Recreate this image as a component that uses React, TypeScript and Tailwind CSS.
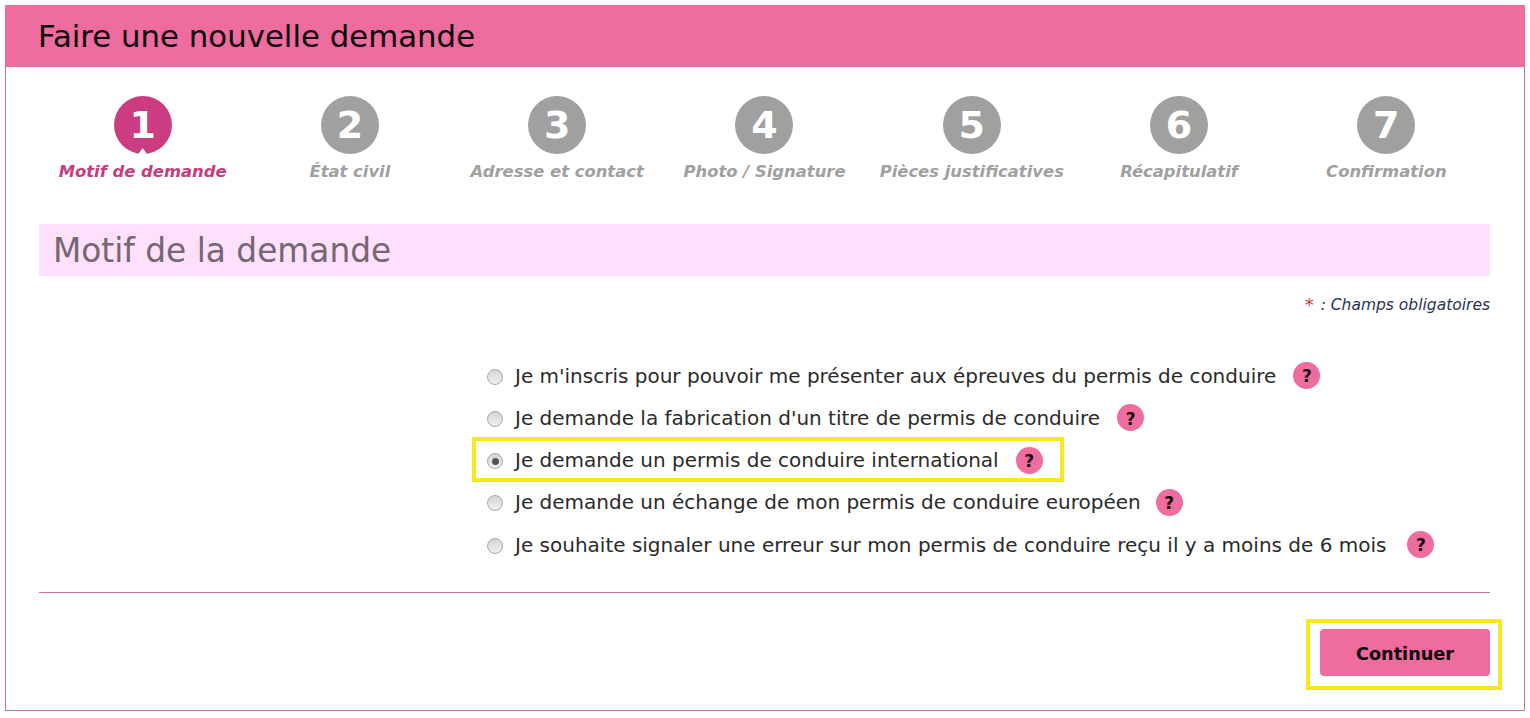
const steps = [
  "Motif de demande",
  "État civil",
  "Adresse et contact",
  "Photo / Signature",
  "Pièces justificatives",
  "Récapitulatif",
  "Confirmation",
];

const options = [
  { label: "Je m'inscris pour pouvoir me présenter aux épreuves du permis de conduire", gap: "ml-[17px]" },
  { label: "Je demande la fabrication d'un titre de permis de conduire", gap: "ml-[17px]" },
  { label: "Je demande un permis de conduire international", gap: "ml-[17px]", checked: true },
  { label: "Je demande un échange de mon permis de conduire européen", gap: "ml-[15px]" },
  { label: "Je souhaite signaler une erreur sur mon permis de conduire reçu il y a moins de 6 mois", gap: "ml-[21px]" },
];

const Step = ({ index, label }: { index: number; label: string }) => {
  const active = index === 0;
  return (
    <div className="flex flex-col items-center">
      <div
        className={`relative flex h-[58px] w-[58px] items-center justify-center rounded-full text-[38px] font-bold text-white ${
          active ? "bg-[#cb3d80]" : "bg-[#a0a0a0]"
        }`}
      >
        {index + 1}
        {active && (
          <span className="absolute bottom-[-1px] left-[24px] h-[7px] w-[10px] bg-white [clip-path:polygon(50%_0,100%_100%,0_100%)]" />
        )}
      </div>
      <div
        className={`mt-[8px] whitespace-nowrap text-[16.4px] font-bold italic leading-5 ${
          active ? "text-[#c73c7d]" : "text-[#a0a0a0]"
        }`}
      >
        {label}
      </div>
    </div>
  );
};

const Radio = ({ checked }: { checked?: boolean }) => (
  <span className="mt-[2px] flex h-4 w-4 shrink-0 items-center justify-center rounded-full border border-[#a9a9a9] bg-gradient-to-b from-[#d4d4d4] to-[#f0f0f0]">
    {checked && <span className="h-[7px] w-[7px] rounded-full bg-[#555555]" />}
  </span>
);

const App = () => {
  return (
    <div className="h-[718px] w-[1530px] bg-white px-[5px] pt-[5px] font-['DejaVu_Sans',Verdana,sans-serif]">
      <div className="flex h-[706px] flex-col border-x border-b border-[#cb6f9f]">
        <div className="-mx-px flex h-[62px] items-center bg-[#ee6c9e] pl-[33px] text-[30.8px] text-[#0a0008]">
          Faire une nouvelle demande
        </div>

        <div className="flex-1 pl-[33px] pr-[34px] pt-[29px]">
          <div className="grid grid-cols-7">
            {steps.map((label, i) => (
              <Step key={label} index={i} label={label} />
            ))}
          </div>

          <div className="mt-[42px] flex h-[52px] items-center bg-[#fedffc] pl-[14px] pt-[3px] text-[32.8px] text-[#746770]">
            Motif de la demande
          </div>

          <div className="mt-[19px] flex items-center justify-end text-[15.5px] italic leading-5 text-[#2b3356]">
            <span className="mr-[7px] text-[18px] not-italic text-[#e0343c]">*</span>: Champs obligatoires
          </div>

          <div className="ml-[448px] mt-[48.5px] flex flex-col gap-[18.25px]">
            {options.map((o) => (
              <div key={o.label} className="relative flex h-6 items-center text-[20px] text-[#2b2b2b]">
                <Radio checked={o.checked} />
                <span className="ml-3 whitespace-nowrap">{o.label}</span>
                <span className={`${o.gap} flex h-[27px] w-[27px] shrink-0 items-center justify-center rounded-full bg-[#ee6c9e] pt-[3px] text-[17px] font-bold text-[#12040c]`}>
                  ?
                </span>
                {o.checked && (
                  <span className="absolute left-[-15px] top-[-11px] h-[45px] w-[592px] border-4 border-[#f7e91c]" />
                )}
              </div>
            ))}
          </div>

          <div className="mt-[35.5px] border-t border-[#cb6f9f]" />

          <div className="mt-[36px] flex justify-end">
            <div className="relative">
              <button className="h-[47px] w-[170px] rounded-[4px] bg-[#ee6c9e] pt-[3px] text-[17.7px] font-bold text-[#0a0008]">
                Continuer
              </button>
              <span className="absolute left-[-14px] top-[-10px] h-[71px] w-[196px] border-4 border-[#f7e91c]" />
            </div>
          </div>
        </div>
      </div>
    </div>
  );
};

export default App;
